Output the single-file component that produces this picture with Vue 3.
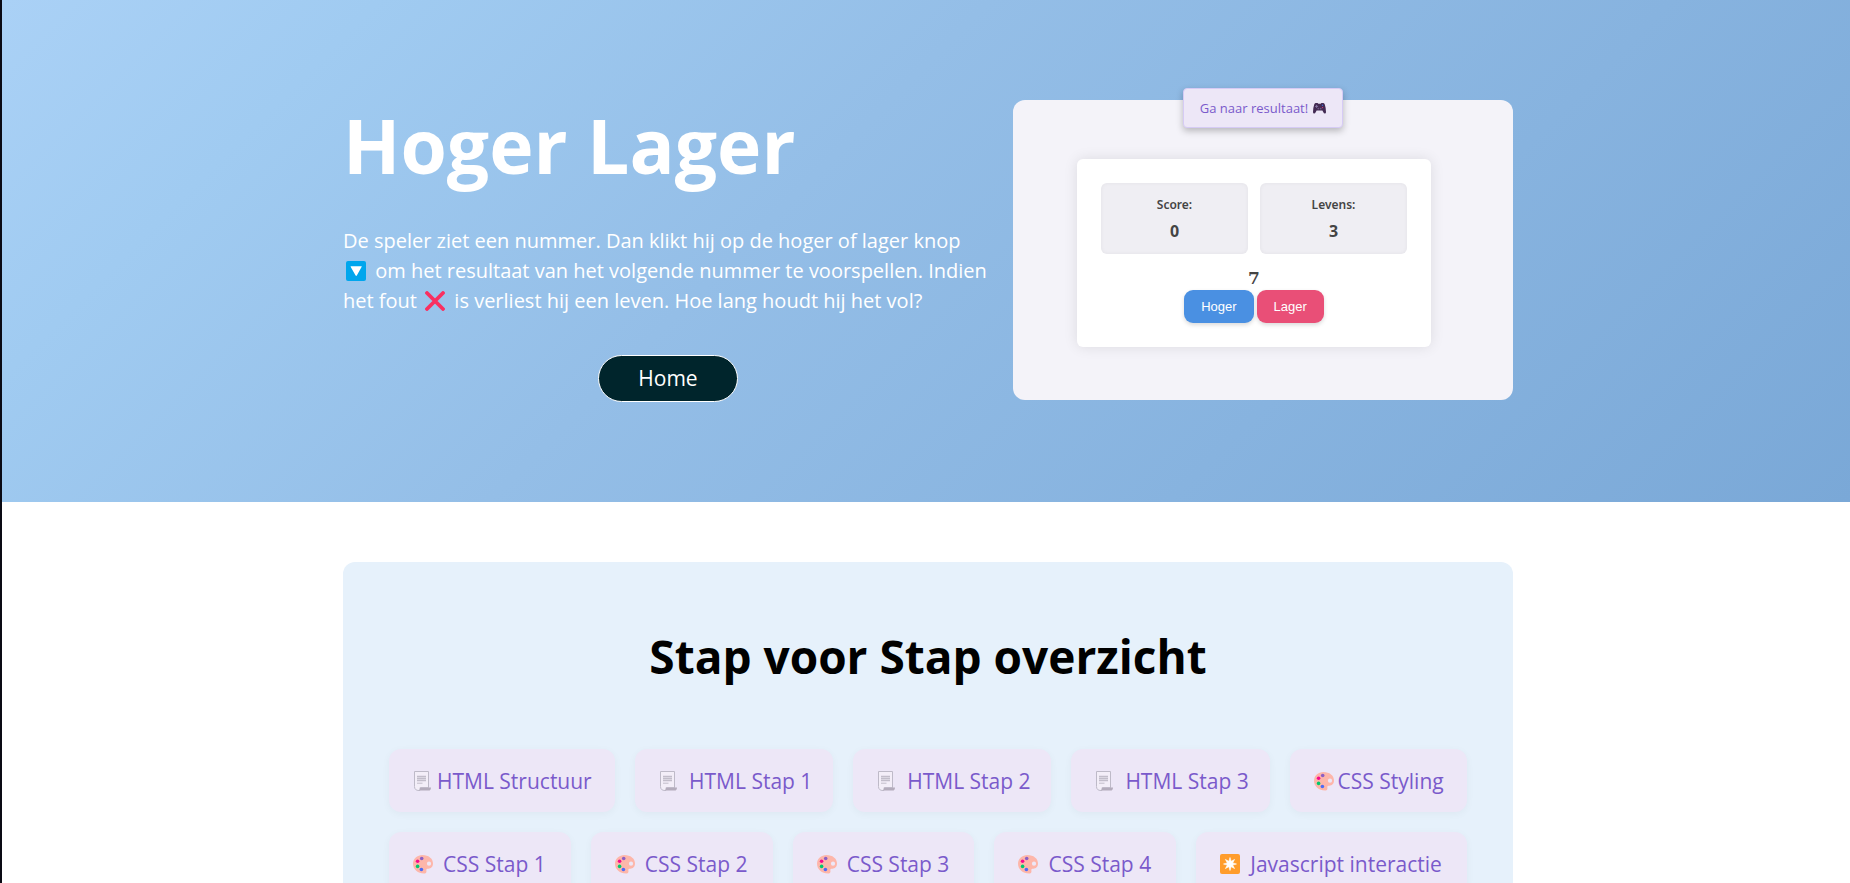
<script setup>
const steps = [
  { label: 'HTML Structuur', icon: 'page', main: true },
  { label: 'HTML Stap 1', icon: 'page' },
  { label: 'HTML Stap 2', icon: 'page' },
  { label: 'HTML Stap 3', icon: 'page' },
  { label: 'CSS Styling', icon: 'palette', main: true },
  { label: 'CSS Stap 1', icon: 'palette' },
  { label: 'CSS Stap 2', icon: 'palette' },
  { label: 'CSS Stap 3', icon: 'palette' },
  { label: 'CSS Stap 4', icon: 'palette' },
  { label: 'Javascript interactie', icon: 'star' },
]
const stats = [
  { label: 'Score:', value: 0 },
  { label: 'Levens:', value: 3 },
]
</script>

<template>
  <div class="page">
    <header class="hero">
      <div class="container hero-row">
        <div class="intro">
          <h1>Hoger Lager</h1>
          <p>
            De speler ziet een nummer. Dan klikt hij op de hoger of lager knop<br>
            <svg class="emoji" viewBox="0 0 20 20" aria-hidden="true">
              <rect width="20" height="20" rx="2" fill="#00a6ed" />
              <path d="M5 5.2h10.4q.6 0 .3.6L10.8 14.6q-.6.9-1.2 0L4.6 5.8q-.2-.6.4-.6z" fill="#fff" />
            </svg>
            om het resultaat van het volgende nummer te voorspellen. Indien<br>
            het fout
            <svg class="emoji" viewBox="0 0 20 20" aria-hidden="true">
              <path d="M2 2l16 16M18 2L2 18" stroke="#f92f60" stroke-width="3.8" stroke-linecap="round" />
            </svg>
            is verliest hij een leven. Hoe lang houdt hij het vol?
          </p>
          <a class="home" href="#">Home</a>
        </div>

        <div class="preview">
          <a class="result-link" href="#resultaat">
            Ga naar resultaat!
            <svg class="pad" viewBox="0 0 13 12" aria-hidden="true">
              <path d="M2.6 1h2l.7.8h2.4l.7-.8h2q1 .1 1.4 1.4Q13 6 13 10q0 1.6-1.1 1.6-1 0-1.7-1.5L9.4 8.4H3.6l-.8 1.7q-.7 1.5-1.7 1.5Q0 11.600 0 10 0 6 1.200 2.400 1.600 1.100 2.600 1z" fill="#432a53" />
              <path d="M3.600 2.900v3M2.100 4.400h3" stroke="#8a79a8" stroke-width=".9" />
              <circle cx="9.500" cy="3.200" r=".7" fill="#3f6fd8" />
              <circle cx="9.500" cy="5.600" r=".7" fill="#d43c78" />
              <circle cx="5.300" cy="6.600" r=".9" fill="#6f5a86" />
              <circle cx="7.700" cy="6.600" r=".9" fill="#6f5a86" />
            </svg>
          </a>
          <div class="game">
            <div class="stats">
              <div v-for="s in stats" :key="s.label" class="stat">
                <span>{{ s.label }}</span>
                <strong>{{ s.value }}</strong>
              </div>
            </div>
            <div class="number">7</div>
            <div class="actions">
              <button type="button" class="higher">Hoger</button>
              <button type="button" class="lower">Lager</button>
            </div>
          </div>
        </div>
      </div>
    </header>

    <main class="content">
      <section class="container overview">
        <h2>Stap voor Stap overzicht</h2>
        <nav class="steps">
          <a v-for="s in steps" :key="s.label" href="#" class="step" :class="{ main: s.main }">
            <svg v-if="s.icon === 'page'" viewBox="0 0 20 20" aria-hidden="true">
              <path d="M1.500.5h14v16.300h-8V18q0 1.500-1.500 1.500-4.500 0-4.500-4z" fill="#f3eef8" stroke="#bebac8" />
              <path d="M6.800 16.400H18q0 3.100-2.400 3.100H5.500q1.300-.4 1.300-3.100z" fill="#b4acbc" />
              <path d="M4 5.500h9M4 7.500h9M4 9.500h9" stroke="#c2bdca" stroke-width="1.400" />
              <path d="M4 12.200h5.500" stroke="#c2bdca" />
            </svg>
            <svg v-else-if="s.icon === 'palette'" viewBox="0 0 20 20" aria-hidden="true">
              <path fill-rule="evenodd" d="M9.500 1C15.500 1 20 4.500 20 9.500c0 3.400-2.300 5.200-4.600 5.200-1.700 0-2.400.5-2.100 1.600.4 1.500.2 3.300-2.300 3.300C5 19.600 0 15.500 0 9.800 0 4.500 4.200 1 9.500 1zM16 7.600a2.100 2.100 0 1 0 0 4.200 2.100 2.100 0 1 0 0-4.200z" fill="#fdb6aa" />
              <circle cx="8.700" cy="4.500" r="1.800" fill="#8c5fc4" />
              <circle cx="4.600" cy="7.300" r="1.800" fill="#f70a8d" />
              <circle cx="4.600" cy="12.400" r="1.800" fill="#00c86c" />
              <circle cx="8.400" cy="15.500" r="1.800" fill="#4c6bf5" />
            </svg>
            <svg v-else viewBox="0 0 20 20" aria-hidden="true">
              <rect width="20" height="20" rx="2" fill="#ff9d2c" />
              <path d="M10 3.500l1.100 3.800 3.500-1.900-1.900 3.500 3.800 1.100-3.800 1.100 1.900 3.500-3.500-1.900L10 16.500l-1.100-3.800-3.500 1.900 1.900-3.500L3.500 10l3.800-1.100-1.900-3.500 3.500 1.900z" fill="#fff" stroke="#fff" stroke-width=".6" stroke-linejoin="round" />
            </svg>
            <span>{{ s.label }}</span>
          </a>
        </nav>
      </section>
    </main>
  </div>
</template>

<style>
body {
  margin: 0;
  background: #fff;
}
</style>

<style scoped>
.page {
  min-height: 100vh;
  box-sizing: border-box;
  border-left: 2px solid #0a0a14;
  font-family: "Comic Sans MS", "Open Sans", "Noto Sans", sans-serif;
}
.hero,
.content {
  padding-left: 4px;
}
.hero {
  padding-top: 100px;
  padding-bottom: 100px;
  background: linear-gradient(135deg, #aad1f6 0%, #a0cbf1 16%, #94bee7 42%, #7aa8d7 100%);
}
.container {
  max-width: 1170px;
  margin: 0 auto;
  box-sizing: border-box;
}
.hero-row {
  display: flex;
  align-items: flex-start;
  gap: 20px;
}
.intro {
  flex: 1;
  display: flex;
  flex-direction: column;
  align-items: center;
  color: #fff;
}
h1 {
  align-self: stretch;
  margin: 0 0 36px;
  font-size: 75px;
  line-height: 90px;
  font-weight: 700;
}
p {
  align-self: stretch;
  margin: 0 0 39px;
  font-size: 20px;
  line-height: 30px;
  font-weight: 500;
}
.emoji {
  width: 20px;
  height: 20px;
  margin: 0 4px 0 3px;
  vertical-align: -3px;
}
.home {
  padding: 0 39px;
  border: 1px solid #fff;
  border-radius: 24px;
  background: #00252c;
  color: #fff;
  font-size: 21px;
  line-height: 45px;
  font-weight: 500;
  text-decoration: none;
}
.preview {
  position: relative;
  flex: 0 1 500px;
  min-height: 300px;
  box-sizing: border-box;
  padding: 59px 82px 53px 64px;
  border-radius: 12px;
  background: #f4f3f9;
}
.result-link {
  position: absolute;
  top: -12px;
  left: 50%;
  transform: translateX(-50%);
  display: flex;
  align-items: center;
  justify-content: center;
  gap: 5px;
  width: 160px;
  height: 40px;
  box-sizing: border-box;
  border: 1px solid #d6cbf5;
  border-radius: 4px;
  background: #ede7f7;
  box-shadow: 0 3px 7px rgba(0, 0, 0, 0.25);
  color: #7a5acb;
  font-size: 13px;
  white-space: nowrap;
  text-decoration: none;
}
.pad {
  width: 13px;
  height: 12px;
}
.game {
  box-sizing: border-box;
  padding: 24px;
  border-radius: 6px;
  background: #fff;
  box-shadow: 0 0 14px rgba(0, 0, 0, 0.1);
  color: #444;
}
.stats {
  display: grid;
  grid-template-columns: 1fr 1fr;
  gap: 12px;
}
.stat {
  display: flex;
  flex-direction: column;
  align-items: center;
  gap: 6px;
  height: 71px;
  box-sizing: border-box;
  padding-top: 13px;
  border-radius: 6px;
  background: #efeef3;
  box-shadow: inset 0 0 4px rgba(0, 0, 0, 0.05);
  font-family: "Noto Sans", "Open Sans", sans-serif;
  font-size: 12px;
  line-height: 18px;
  font-weight: 600;
}
.stat strong {
  font-size: 16px;
  line-height: 22px;
  font-weight: 700;
}
.number {
  margin-top: 12px;
  font-family: "DejaVu Serif", serif;
  font-size: 17px;
  line-height: 24px;
  font-weight: 900;
  text-align: center;
}
.actions {
  display: flex;
  justify-content: center;
  gap: 3px;
}
.actions button {
  height: 33px;
  padding: 0 17px;
  border: 0;
  border-radius: 9px;
  box-shadow: 0 2px 4px rgba(0, 0, 0, 0.15);
  color: #fff;
  font-family: "Liberation Sans", Arial, sans-serif;
  font-size: 13px;
}
.actions .higher {
  background: #4a90e2;
}
.actions .lower {
  background: #e94f77;
}
.overview {
  margin-top: 60px;
  padding: 64px 46px;
  border-radius: 12px;
  background: #e6f1fb;
}
h2 {
  margin: 0 0 63px;
  font-size: 46px;
  line-height: 60px;
  font-weight: 700;
  color: #000;
  text-align: center;
}
.steps {
  display: flex;
  flex-wrap: wrap;
  justify-content: center;
  gap: 20px;
}
.step {
  flex-grow: 1;
  display: flex;
  align-items: center;
  gap: 10px;
  height: 63px;
  box-sizing: border-box;
  padding: 0 20px 0 24px;
  border-radius: 12px;
  background: #ede7f7;
  box-shadow: 0 2px 8px rgba(0, 0, 0, 0.04);
  color: #7a5acb;
  font-size: 21px;
  white-space: nowrap;
  text-decoration: none;
}
.step.main {
  flex-grow: 4;
  gap: 4px;
}
.step svg {
  flex: none;
  width: 20px;
  height: 20px;
}
</style>
